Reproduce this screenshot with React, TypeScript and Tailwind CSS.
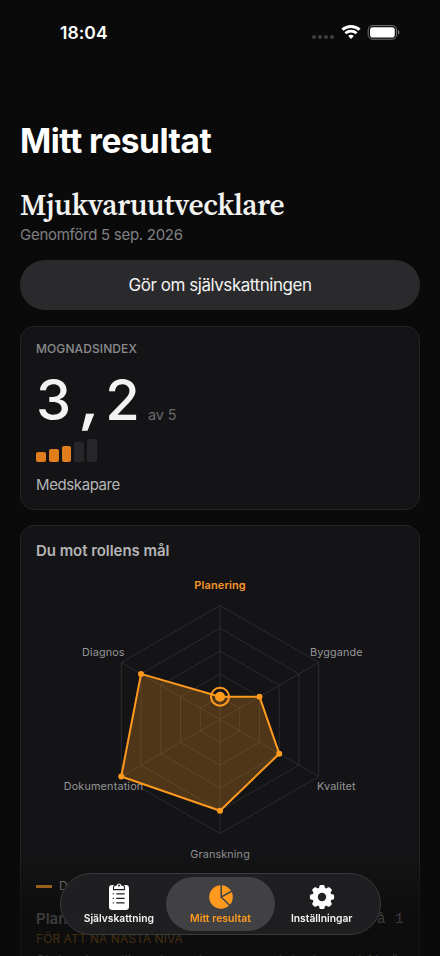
import React from 'react';

const CENTER = { x: 200, y: 193.5 };
const RADIUS = 114;
const LEVELS = [1, 2, 3, 4, 5];

interface Axis {
  name: string;
  value: number;
  x: number;
  y: number;
  anchor: 'start' | 'middle' | 'end';
  width: number;
}

const AXES: Axis[] = [
  { name: 'Planering', value: 1, x: 200, y: 62.5, anchor: 'middle', width: 51.5 },
  { name: 'Byggande', value: 2, x: 290, y: 130, anchor: 'start', width: 52.5 },
  { name: 'Kvalitet', value: 3, x: 297, y: 264, anchor: 'start', width: 38.5 },
  { name: 'Granskning', value: 4, x: 200, y: 331.5, anchor: 'middle', width: 59.5 },
  { name: 'Dokumentation', value: 5, x: 123.2, y: 264, anchor: 'end', width: 79.5 },
  { name: 'Diagnos', value: 4, x: 104.5, y: 130, anchor: 'end', width: 42.5 },
];

function point(index: number, level: number) {
  const angle = (Math.PI / 3) * index - Math.PI / 2;
  const r = (RADIUS * level) / 5;
  return { x: CENTER.x + r * Math.cos(angle), y: CENTER.y + r * Math.sin(angle) };
}

function toPoints(levels: number[]) {
  return levels
    .map((level, i) => {
      const p = point(i, level);
      return `${p.x.toFixed(2)},${p.y.toFixed(2)}`;
    })
    .join(' ');
}

function StatusBar() {
  return (
    <div className="flex h-[65px] items-start justify-between pl-[60px] pr-10 pt-[21px]">
      <span className="text-[17.5px] font-semibold leading-[24px] tracking-[0.05px] text-white">18:04</span>
      <svg width="89" height="20" viewBox="0 0 89 20" className="mt-px" fill="none">
        <g fill="#3d3d3d">
          <circle cx="3" cy="15" r="2.1" />
          <circle cx="9" cy="15" r="2.1" />
          <circle cx="15" cy="15" r="2.1" />
          <circle cx="21" cy="15" r="2.1" />
        </g>
        <path d="M31.4 7.6a13.2 13.2 0 0 1 17.2 0" stroke="#fff" strokeWidth="3" />
        <path d="M34.4 11.2a8.4 8.4 0 0 1 11.2 0" stroke="#fff" strokeWidth="2.8" />
        <path d="M37.2 14a4.2 4.2 0 0 1 5.6 0L40 17Z" fill="#fff" />
        <rect x="57.2" y="3.6" width="28.4" height="13.6" rx="4.4" stroke="#77777a" />
        <rect x="59" y="5.3" width="24.8" height="10.2" rx="2.8" fill="#fff" />
        <path d="M87 8.3v4.2c.9-.3 1.4-1.1 1.4-2.1s-.5-1.8-1.4-2.1Z" fill="#77777a" />
      </svg>
    </div>
  );
}

function MaturityCard() {
  const bars = ['h-[10px]', 'h-[13px]', 'h-[16px]', 'h-[20px]', 'h-[23px]'];
  return (
    <section className="mt-4 h-[184px] rounded-[14px] border border-[#242426] bg-[#141416] px-[15px] pt-[14px]">
      <h3 className="text-[12px] font-medium leading-4 tracking-[0.1px] text-[#8c8c8e]">MOGNADSINDEX</h3>
      <div className="mt-[13px] flex h-[60px] items-baseline font-medium text-[#f3f3f1]">
        <span className="w-[35px] text-center text-[56px] leading-[60px]">3</span>
        <span className="w-[34px] origin-bottom -skew-x-6 text-center text-[56px] font-bold leading-[60px]">,</span>
        <span className="w-[35px] text-center text-[56px] leading-[60px]">2</span>
        <span className="ml-2 text-[14.5px] font-normal tracking-[-0.1px] text-[#69696b]">av 5</span>
      </div>
      <div className="mt-[9px] flex h-[23px] items-end gap-[3px]">
        {bars.map((height, i) => (
          <div
            key={height}
            className={`w-[9.8px] rounded-[2px] ${height} ${i < 3 ? 'bg-[#e07d1c]' : 'bg-[#272729]'}`}
          />
        ))}
      </div>
      <p className="mt-3 text-[15px] leading-[22px] tracking-[-0.4px] text-[#b4b4b6]">Medskapare</p>
    </section>
  );
}

function RadarChart() {
  const values = AXES.map((axis) => axis.value);
  const focus = point(0, values[0]);
  return (
    <svg width="400" height="345" viewBox="0 0 400 345" className="-mx-4 -mt-9 max-w-none" fill="none">
      <g stroke="#2b2b2d" strokeWidth="1">
        {LEVELS.map((level) => (
          <polygon key={level} points={toPoints(AXES.map(() => level))} />
        ))}
        {AXES.map((axis, i) => {
          const p = point(i, 5);
          return <line key={axis.name} x1={CENTER.x} y1={CENTER.y} x2={p.x} y2={p.y} />;
        })}
      </g>
      {AXES.map((axis, i) => (
        <text
          key={axis.name}
          x={axis.x}
          y={axis.y}
          textAnchor={axis.anchor}
          textLength={axis.width}
          className={i === 0 ? 'fill-[#f6962a] text-[11px] font-semibold' : 'fill-[#969698] text-[10.8px]'}
        >
          {axis.name}
        </text>
      ))}
      <polygon
        points={toPoints(values)}
        fill="#ff9a1f"
        fillOpacity="0.25"
        stroke="#ff9a1f"
        strokeWidth="2"
        strokeLinejoin="round"
      />
      {values.map((value, i) => {
        const p = point(i, value);
        return <circle key={AXES[i].name} cx={p.x} cy={p.y} r={i === 0 ? 5 : 3} fill="#ff9a1f" />;
      })}
      <circle cx={focus.x} cy={focus.y} r="9" stroke="#ff9a1f" strokeWidth="2" />
    </svg>
  );
}

function ProfileCard() {
  return (
    <section className="mt-[15px] h-[520px] rounded-[14px] border border-[#242426] bg-[#141416] px-[15px] pt-[14px]">
      <h3 className="text-[15px] font-semibold leading-[22px] tracking-[-0.05px] text-[#b4b4b6]">Du mot rollens mål</h3>
      <RadarChart />
      <div className="mt-[5px] flex h-5 items-center gap-[7px] text-[12px] text-[#98989a]">
        <span className="h-[3px] w-4 bg-[#f6962a]" />
        <span>Du</span>
      </div>
      <div className="mt-[13px] flex h-5 items-center justify-between">
        <h4 className="text-[15px] font-semibold text-[#a6a6a8]">Planering</h4>
        <span className="font-['Liberation_Mono'] text-[14px] tracking-[0.6px] text-[#a8a8aa]">Nivå 1</span>
      </div>
      <p className="text-[12px] leading-5 tracking-[0.06px] text-[#c98026]">FÖR ATT NÅ NÄSTA NIVÅ</p>
      <p className="mt-0.5 whitespace-nowrap text-[14px] leading-5 tracking-[-0.1px] text-[#98989a]">
        Skriv utkast till stories och acceptanskriterier med AI på
      </p>
    </section>
  );
}

function ClipboardIcon() {
  return (
    <svg width="22" height="30" viewBox="0 0 22 30">
      <rect x="1" y="4" width="20" height="25" rx="3.2" fill="#fff" />
      <path
        d="M5.5 8.6V6.5Q5.5 4.2 7.8 4.200h.4a2.900 2.900 0 0 1 5.600 0h.4q2.300 0 2.300 2.300v2.100Z"
        fill="#fff"
        stroke="#222224"
        strokeWidth="1.1"
      />
      <circle cx="11" cy="4.5" r="1" fill="#222224" />
      <path
        d="M8.7 12.8h7.5M8.7 17.3h7.5M8.7 21.8h7.5M5.2 12.8h.3M5.2 17.3h.3M5.2 21.8h.3"
        stroke="#222224"
        strokeWidth="1.3"
        strokeLinecap="round"
      />
    </svg>
  );
}

function PieIcon() {
  return (
    <svg width="26" height="26" viewBox="0 0 26 26">
      <circle cx="13" cy="13" r="11.8" fill="#ff9a1f" />
      <path d="M13.2 0v13L25 6.5M13.2 13l9 9" stroke="#454547" strokeWidth="1.6" fill="none" />
    </svg>
  );
}

function GearIcon() {
  return (
    <svg width="26" height="26" viewBox="-13 -13 26 26">
      <g fill="#fff">
        <circle r="9.6" />
        {[0, 45, 90, 135, 180, 225, 270, 315].map((angle) => (
          <path
            key={angle}
            d="M-3.2-8-2.5-11.200Q-2.200-12.100-1.300-12.100H1.300Q2.200-12.100 2.500-11.200L3.200-8Z"
            transform={`rotate(${angle})`}
          />
        ))}
      </g>
      <circle r="4.2" fill="#222224" />
    </svg>
  );
}

function TabBar() {
  return (
    <nav className="absolute left-[60px] top-[873px] flex h-[62px] w-[321px] items-center rounded-full border border-[#3a3a3c] bg-[#202022]/94 p-[3px] text-[10.3px] font-semibold text-[#f2f2f2] backdrop-blur-[2px]">
      <div className="-mr-2 flex h-[54px] w-[110px] flex-col items-center">
        <div className="flex h-[36px] items-center pt-px">
          <ClipboardIcon />
        </div>
        <span className="leading-[11px]">Självskattning</span>
      </div>
      <div className="flex h-[54px] w-[110px] flex-col items-center rounded-full bg-[#414143] text-[#ff9a1f]">
        <div className="flex h-[36px] items-center pt-1">
          <PieIcon />
        </div>
        <span className="text-[10.5px] leading-[11px]">Mitt resultat</span>
      </div>
      <div className="-ml-2 flex h-[54px] w-[110px] flex-col items-center pr-px">
        <div className="flex h-[36px] items-center pt-1">
          <GearIcon />
        </div>
        <span className="leading-[11px]">Inställningar</span>
      </div>
    </nav>
  );
}

export default function App() {
  return (
    <div className="relative h-[956px] w-[440px] overflow-hidden bg-[#0a0a0a] font-['Inter',sans-serif]">
      <StatusBar />
      <main className="px-5">
        <h1 className="mt-[54px] pt-0.5 text-[33.5px] font-bold leading-[40px] tracking-[-0.5px] text-white">
          Mitt resultat
        </h1>
        <h2 className="mt-[27px] h-[33px] whitespace-nowrap font-['Source_Serif_4','Noto_Serif','Liberation_Serif',serif] text-[29.5px] font-semibold leading-[34px] tracking-[-0.33px] text-[#f3f3f1]">
          Mjukvaruutvecklare
        </h2>
        <p className="mt-1 text-[15px] leading-5 tracking-[-0.28px] text-[#808082]">Genomförd 5 sep. 2026</p>
        <button className="mt-[15px] flex h-[50px] w-full items-center justify-center rounded-full bg-[#2a2a2c] pt-px text-[17px] tracking-[-0.45px] text-[#f3f3f3]">
          Gör om självskattningen
        </button>
        <MaturityCard />
        <ProfileCard />
      </main>
      <div className="absolute inset-x-0 bottom-0 h-[106px] bg-linear-to-b from-[#0a0a0a]/0 via-[#0a0a0a]/68 via-60% to-[#0a0a0a]/72" />
      <TabBar />
    </div>
  );
}
